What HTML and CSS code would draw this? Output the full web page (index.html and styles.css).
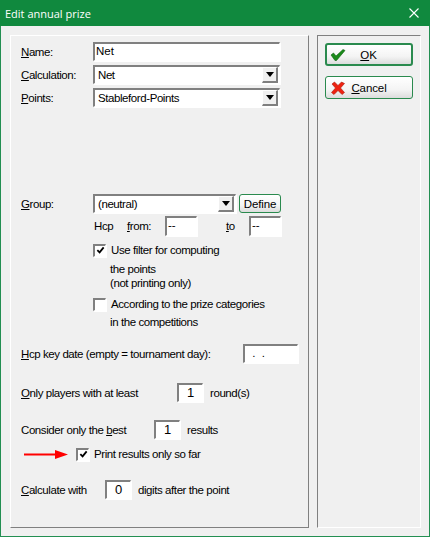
FILE: index.html
```html
<!DOCTYPE html>
<html lang="en">
<head>
    <meta charset="UTF-8">
    <title>Edit annual prize</title>
    <link rel="stylesheet" href="styles.css">
</head>
<body>
    <div class="window">
        <div class="titlebar">
            <span class="title">Edit annual prize</span>
            <svg class="close" width="10" height="10" viewBox="0 0 10 10"><path d="M0.5 0.5L9.5 9.5M9.5 0.5L0.5 9.5" stroke="#fff" stroke-width="1.1" fill="none"/></svg>
        </div>
        <div class="content">
            <div class="panel main-panel">
                <div class="row row-name">
                    <label class="label"><u>N</u>ame:</label>
                    <div class="input input-wide">Net</div>
                </div>
                <div class="row row-calc">
                    <label class="label"><u>C</u>alculation:</label>
                    <div class="combo combo-wide"><span class="combo-text">Net</span><span class="combo-btn"><i class="arrow"></i></span></div>
                </div>
                <div class="row row-points">
                    <label class="label"><u>P</u>oints:</label>
                    <div class="combo combo-wide"><span class="combo-text">Stableford-Points</span><span class="combo-btn"><i class="arrow"></i></span></div>
                </div>

                <div class="row row-group">
                    <label class="label"><u>G</u>roup:</label>
                    <div class="combo combo-group"><span class="combo-text">(neutral)</span><span class="combo-btn"><i class="arrow"></i></span></div>
                    <button class="btn btn-define">Define</button>
                </div>
                <div class="row row-hcp">
                    <span class="hcp-text">Hcp</span>
                    <span class="from-text"><u>f</u>rom:</span>
                    <div class="input input-hcp">--</div>
                    <span class="to-text"><u>t</u>o</span>
                    <div class="input input-hcp">--</div>
                </div>
                <div class="check-row check-filter">
                    <span class="check"><svg width="9" height="9" viewBox="0 0 10 10"><path d="M1.5 4.5L4 7L8.5 1.5" stroke="#000" stroke-width="2" fill="none"/></svg></span>
                    <span>Use filter for computing</span>
                </div>
                <div class="check-note note-points">the points<br>(not printing only)</div>
                <div class="check-row check-categories">
                    <span class="check"></span>
                    <span>According to the prize categories</span>
                </div>
                <div class="check-note note-comp">in the competitions</div>

                <div class="row row-date">
                    <span class="grow"><u>H</u>cp key date (empty = tournament day):</span>
                    <div class="input input-date">&nbsp;.&nbsp;&nbsp;.</div>
                </div>
                <div class="row row-rounds">
                    <span class="rounds-text"><u>O</u>nly players with at least</span>
                    <div class="input input-num">1</div>
                    <span class="after-num">round(s)</span>
                </div>
                <div class="row row-best">
                    <span class="best-text">Consider only the <u>b</u>est</span>
                    <div class="input input-num">1</div>
                    <span class="after-num">results</span>
                </div>
                <div class="row row-print">
                    <svg class="red-arrow" width="44" height="9" viewBox="0 0 44 9"><path d="M0 3.5H31V0L44 4.5L31 9V5.5H0Z" fill="#f00"/></svg>
                    <span class="check"><svg width="9" height="9" viewBox="0 0 10 10"><path d="M1.5 4.5L4 7L8.5 1.5" stroke="#000" stroke-width="2" fill="none"/></svg></span>
                    <span class="print-text">Print results only so far</span>
                </div>
                <div class="row row-digits">
                    <span class="digits-text"><u>C</u>alculate with</span>
                    <div class="input input-num">0</div>
                    <span class="after-num">digits after the point</span>
                </div>
            </div>
            <div class="panel side-panel">
                <button class="btn btn-side btn-default">
                    <svg class="btn-icon" width="16" height="14" viewBox="0 0 16 14"><path d="M1 7L3.5 5L6 8L13 1.5L15 2.5L6.5 12.5H5Z" fill="#1a8a1a" stroke="#0b5f0b" stroke-width="0.6"/></svg>
                    <span class="btn-label"><u>O</u>K</span>
                </button>
                <button class="btn btn-side">
                    <svg class="btn-icon" width="16" height="14" viewBox="0 0 16 14"><path d="M2 3L4.5 1L8 4.5L11.5 1L14.5 2.5L10.5 7L14.5 11.5L12 13.5L8 9.5L4 13.5L1.5 11.5L5.5 7Z" fill="#ee2211" stroke="#a81808" stroke-width="0.6"/></svg>
                    <span class="btn-label"><u>C</u>ancel</span>
                </button>
            </div>
        </div>
    </div>
</body>
</html>
```

FILE: styles.css
```css
html, body {
    margin: 0;
    padding: 0;
}
body {
    font-family: "Liberation Sans", Arial, sans-serif;
    font-size: 11.5px;
    letter-spacing: -0.42px;
    color: #000;
}
.window {
    width: 430px;
    height: 537px;
    box-sizing: border-box;
    background-color: #f0f0f0;
    border: 1px solid #238f52;
    border-top: none;
    display: flex;
    flex-direction: column;
}
.titlebar {
    height: 26px;
    margin: 0 -1px;
    background-color: #10893e;
    color: #fff;
    display: flex;
    align-items: center;
    justify-content: space-between;
    padding: 0 11px 0 5px;
    flex: none;
}
.title {
    font-family: "Open Sans", sans-serif;
    font-size: 11px;
    letter-spacing: 0;
}
.content {
    display: flex;
    padding: 9px 8px 8px 9px;
    gap: 8px;
    flex: 1;
}
.panel {
    box-sizing: border-box;
    border: 1px solid;
}
.main-panel {
    width: 299px;
    padding: 0 0 0 10px;
    border-color: #fff #808080 #808080 #fff;
}
.side-panel {
    width: 104px;
    padding: 7px 7px;
    display: flex;
    flex-direction: column;
    gap: 10px;
    border-color: #808080 #fff #fff #808080;
}
.row {
    display: flex;
    align-items: center;
    height: 19px;
}
.label {
    width: 72px;
    flex: none;
}
.row-name { margin-top: 6px; }
.row-calc { margin-top: 4px; }
.row-points { margin-top: 4px; }
.row-group { margin-top: 87px; }
.row-hcp { margin-top: 3px; height: 20px; padding-left: 73px; }
.input {
    box-sizing: border-box;
    height: 100%;
    flex: none;
    background-color: #fff;
    border: 2px solid #808080;
    border-right: 1px solid #fff;
    border-bottom: 1px solid #fff;
    box-shadow: 1px 1px 0 #fff;
    padding: 0 0 0 1px;
    line-height: 15px;
    letter-spacing: 0;
    white-space: pre;
}
.input-wide { width: 187px; }
.input-hcp { width: 32px; }
.input-date { width: 55px; padding-left: 4px; }
.input-num { width: 26px; text-align: center; padding-left: 0; font-size: 13px; }
.combo {
    box-sizing: border-box;
    height: 100%;
    flex: none;
    display: flex;
    align-items: center;
    background-color: #fff;
    border: 2px solid #808080;
    border-right: 1px solid #fff;
    border-bottom: 1px solid #fff;
    box-shadow: 1px 1px 0 #fff;
}
.combo-wide { width: 187px; }
.combo-group { width: 143px; }
.combo-text {
    flex: 1;
    padding-left: 3px;
}
.combo-btn {
    width: 16px;
    height: 16px;
    margin-right: 1px;
    box-sizing: border-box;
    background-color: #f0f0f0;
    border: 1px solid;
    border-color: #fff #808080 #808080 #fff;
    border-right-width: 2px;
    border-bottom-width: 2px;
    display: flex;
    align-items: center;
    justify-content: center;
}
.arrow {
    border: 4px solid transparent;
    border-top: 5px solid #000;
    border-bottom: none;
}
.btn {
    font-family: inherit;
    font-size: 11.5px;
    letter-spacing: -0.1px;
    color: #000;
    padding: 0;
    background: linear-gradient(#ffffff, #f4f4f4 60%, #dcdcdc);
    border: 1px solid #2a8a4e;
    border-radius: 3px;
}
.btn-define {
    width: 42px;
    height: 100%;
    margin-left: 3px;
}
.hcp-text { width: 33px; }
.from-text { width: 38px; }
.to-text { width: 23px; margin-left: 29px; }
.check-row {
    display: flex;
    align-items: center;
    gap: 5px;
    height: 14px;
    padding-left: 72px;
}
.check {
    box-sizing: border-box;
    width: 13px;
    height: 13px;
    flex: none;
    background-color: #fff;
    border: 2px solid #808080;
    border-right: 1px solid #fff;
    border-bottom: 1px solid #fff;
    box-shadow: 1px 1px 0 #fff;
    display: flex;
    align-items: center;
    justify-content: center;
}
.check svg { flex: none; }
.check-filter { margin-top: 7px; }
.check-note { padding-left: 89px; line-height: 14px; }
.note-points { margin-top: 5px; }
.check-categories { margin-top: 7px; }
.note-comp { margin-top: 4px; }
.row-date { margin-top: 15px; }
.grow { width: 222px; }
.row-rounds { margin-top: 20px; }
.rounds-text { width: 156px; }
.after-num { margin-left: 7px; }
.row-best { margin-top: 18px; }
.best-text { width: 133px; }
.row-print { margin-top: 7px; height: 16px; padding-left: 3px; }
.red-arrow { flex: none; margin-right: 8px; }
.print-text { margin-left: 5px; }
.row-digits { margin-top: 18px; }
.digits-text { width: 84px; }
.btn-side {
    width: 88px;
    height: 23px;
    display: flex;
    align-items: center;
    flex: none;
    padding-left: 4px;
}
.btn-default {
    border-width: 2px;
    padding-left: 3px;
}
.btn-icon { flex: none; }
.btn-label { flex: 1; text-align: center; padding-right: 20px; }
```
